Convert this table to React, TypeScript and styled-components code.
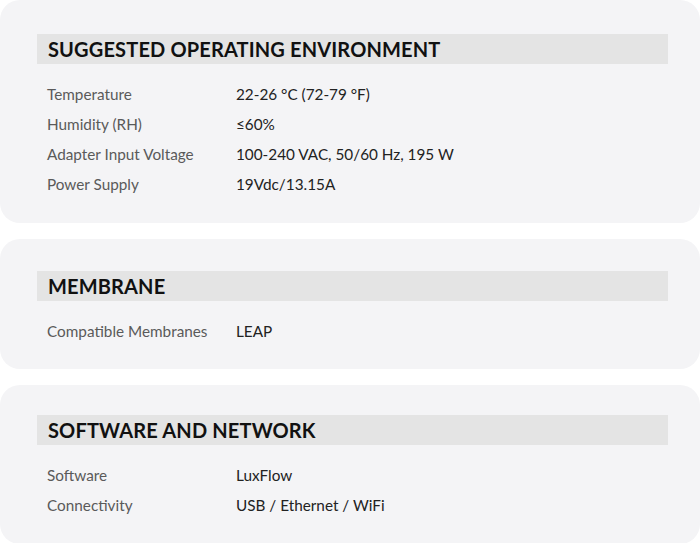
import React from "react";
import styled, { createGlobalStyle } from "styled-components";

const GlobalStyle = createGlobalStyle`
  html, body { margin: 0; padding: 0; background: #ffffff; }
  body { font-family: "Nunito Sans", Lato, "Open Sans", sans-serif; }
`;

const Page = styled.div`
  display: flex;
  flex-direction: column;
  gap: 16px;
  width: 700px;
`;

const Card = styled.section<{ $top: number; $bottom: number }>`
  background: #f4f4f6;
  border-radius: 20px;
  padding: ${(p) => p.$top}px 32px ${(p) => p.$bottom}px 37px;
`;

const Header = styled.h2`
  margin: 0 0 15px 0;
  height: 30px;
  display: flex;
  align-items: center;
  padding-left: 11px;
  background: #e4e4e4;
  font-family: Lato, sans-serif;
  font-weight: 700;
  font-size: 20px;
  color: #111111;
  letter-spacing: 0.15px;
`;

const Table = styled.div`
  display: grid;
  grid-template-columns: 189px 1fr;
  padding-left: 10px;
`;

const Label = styled.div`
  height: 30px;
  display: flex;
  align-items: center;
  font-family: Lato, sans-serif;
  font-size: 15.3px;
  color: #5a5a5a;
`;

const Value = styled(Label)`
  color: #222222;
`;

const sections: { title: string; top: number; bottom: number; rows: [string, string][] }[] = [
  {
    title: "SUGGESTED OPERATING ENVIRONMENT",
    top: 34,
    bottom: 24,
    rows: [
      ["Temperature", "22-26 °C (72-79 °F)"],
      ["Humidity (RH)", "≤60%"],
      ["Adapter Input Voltage", "100-240 VAC, 50/60 Hz, 195 W"],
      ["Power Supply", "19Vdc/13.15A"],
    ],
  },
  {
    title: "MEMBRANE",
    top: 32,
    bottom: 23,
    rows: [["Compatible Membranes", "LEAP"]],
  },
  {
    title: "SOFTWARE AND NETWORK",
    top: 30,
    bottom: 24,
    rows: [
      ["Software", "LuxFlow"],
      ["Connectivity", "USB / Ethernet / WiFi"],
    ],
  },
];

export default function App() {
  return (
    <>
      <GlobalStyle />
      <Page>
        {sections.map((s) => (
          <Card key={s.title} $top={s.top} $bottom={s.bottom}>
            <Header>{s.title}</Header>
            <Table>
              {s.rows.map(([l, v]) => (
                <React.Fragment key={l}>
                  <Label>{l}</Label>
                  <Value>{v}</Value>
                </React.Fragment>
              ))}
            </Table>
          </Card>
        ))}
      </Page>
    </>
  );
}
